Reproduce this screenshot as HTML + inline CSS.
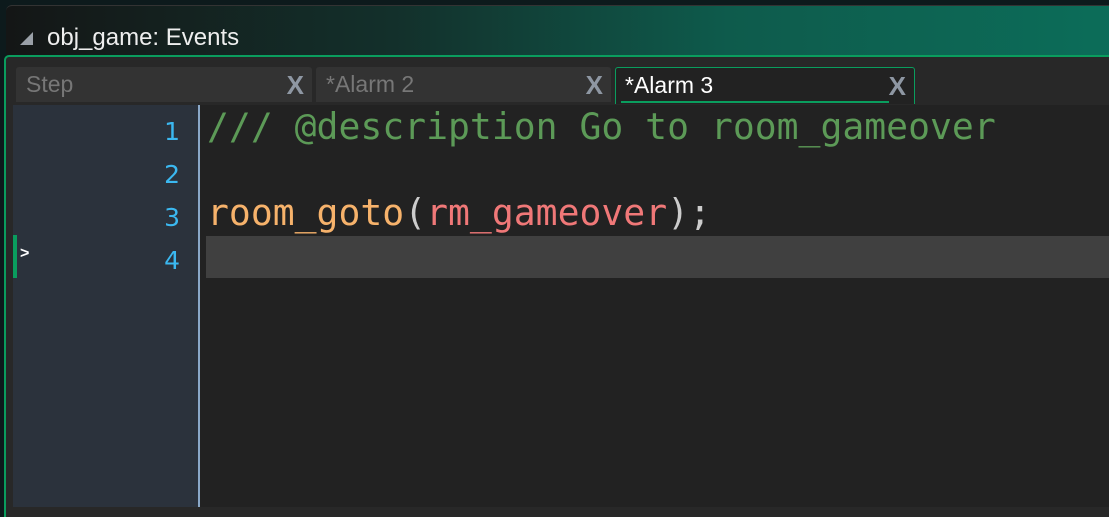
<!DOCTYPE html>
<html><head><style>
body{margin:0;width:1109px;height:507px;overflow:hidden;background:#0d1a1c;position:relative;font-family:"Liberation Sans",sans-serif}
.title{position:absolute;left:6px;top:5px;width:1110px;height:50px;border-radius:6px 0 0 0;background:linear-gradient(90deg,#141616 0%,#13302b 35%,#0e5b4c 65%,#0c6d59 100%);border-top:1px solid #333}
.title span{position:absolute;left:41px;top:18px;color:#eee;font-size:24px}
.tri{position:absolute;left:14px;top:26px;width:0;height:0;border-left:13px solid transparent;border-bottom:13px solid #9aa0a8}
.panel{position:absolute;left:4px;top:55px;width:1110px;height:460px;background:#282828;border-top:2px solid #0a9d5e;border-left:2px solid #0a9d5e;border-radius:5px 0 0 0}
.tab{position:absolute;top:67px;height:35px;background:#333;color:#777;font-size:23px;box-sizing:border-box;padding:4px 0 0 10px;border-radius:3px 3px 0 0}
.x{position:absolute;right:8px;top:5px;color:#8e97a3;font-size:26px;font-weight:bold;line-height:26px}
.gut{position:absolute;left:13px;top:105px;width:185px;height:402px;background:#2b323c;border-right:2px solid #8aa8c8}
.code{position:absolute;left:200px;top:105px;width:909px;height:402px;background:#222}
.ln{position:absolute;right:18px;color:#3bb8f0;font-family:"DejaVu Sans",sans-serif;font-size:25px}
.cl{position:absolute;left:7px;font-family:"DejaVu Sans Mono","Liberation Mono",monospace;font-size:36.4px;white-space:pre}
</style></head><body>
<div class="title"><div class="tri"></div><span>obj_game: Events</span></div>
<div class="panel"></div>
<div class="tab" style="left:16px;width:296px">Step<span class="x">X</span></div>
<div class="tab" style="left:316px;width:295px">*Alarm 2<span class="x">X</span></div>
<div class="tab" style="left:615px;width:300px;background:#222;color:#fff;border:1px solid #0a9d5e;border-bottom:none;height:37px;padding-left:9px">*Alarm 3<span class="x">X</span><div style="position:absolute;left:5px;right:25px;bottom:1px;height:2px;background:#0a9d5e"></div></div>
<div class="gut">
<div class="ln" style="top:12px">1</div>
<div class="ln" style="top:55px">2</div>
<div class="ln" style="top:98px">3</div>
<div class="ln" style="top:141px">4</div>
<div style="position:absolute;left:0;top:130px;width:4px;height:43px;background:#0a9d5e"></div>
<div style="position:absolute;left:7px;top:140px;color:#fff;font-size:16px;font-weight:bold">&gt;</div>
</div>
<div class="code">
<div style="position:absolute;left:6px;top:131px;width:903px;height:42px;background:#404040"></div>
<div class="cl" style="top:0px;color:#5c9a57">/// @description Go to room_gameover</div>
<div class="cl" style="top:86px;color:#ccc"><span style="color:#f6b26b">room_goto</span>(<span style="color:#f07878">rm_gameover</span>);</div>
</div>
</body></html>
